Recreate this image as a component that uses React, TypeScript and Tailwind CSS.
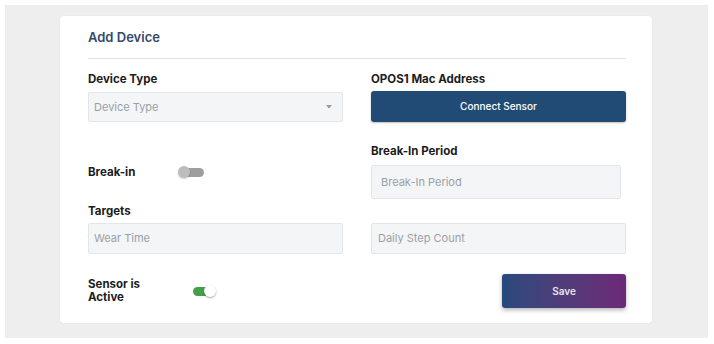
function Toggle({ on }: { on: boolean }) {
  if (on) {
    return (
      <div className="relative h-[12px] w-[26px]">
        <div className="absolute left-0 top-[1.5px] h-[9px] w-[20px] rounded-full bg-[#43a047]" />
        <div className="absolute right-[3px] top-0 h-[12px] w-[12px] rounded-full bg-white shadow-[0_1px_2px_rgba(0,0,0,0.35)]" />
      </div>
    );
  }
  return (
    <div className="relative h-[12px] w-[26px]">
      <div className="absolute right-0 top-[1.5px] h-[9px] w-[20px] rounded-full bg-[#9e9e9e]" />
      <div className="absolute left-0 top-0 h-[12px] w-[12px] rounded-full bg-[#bdbdbd] shadow-[0_1px_2px_rgba(0,0,0,0.2)]" />
    </div>
  );
}

function Field({
  placeholder,
  className = "",
  children,
}: {
  placeholder: string;
  className?: string;
  children?: React.ReactNode;
}) {
  return (
    <div
      className={`flex items-center rounded-[2px] border border-[#e2e5e9] bg-[#f3f5f7] text-[11px] text-[#9aa0a6] ${className}`}
    >
      {placeholder}
      {children}
    </div>
  );
}

export default function App() {
  return (
    <div
      className="h-[344px] w-[714px] bg-white p-[5px]"
      style={{ fontFamily: "Inter, 'Liberation Sans', sans-serif" }}
    >
      <div className="h-[333px] w-[703px] bg-[#eeeeee] pl-[55px] pt-[11px]">
        <div className="h-[307px] w-[592px] rounded-[4px] bg-white pl-[28px] pr-[26px] pt-[13px] shadow-[0_0_2px_rgba(0,0,0,0.06)]">
          <h1 className="text-[13px] font-semibold leading-4 text-[#34496b]">Add Device</h1>
          <div className="mt-[13px] h-px bg-[#e3e3e3]" />

          {/* row 1 */}
          <div className="mt-[13px] grid grid-cols-2 gap-x-[28px]">
            <div>
              <div className="text-[11.5px] font-bold leading-[14px] text-[#1c1c1c]">Device Type</div>
              <Field placeholder="Device Type" className="mt-[6px] h-[30px] justify-between pl-[5px] pr-[10px]">
                <svg width="6" height="4" viewBox="0 0 6 4">
                  <path d="M0 0 L6 0 L3 3.5 Z" fill="#9a9a9a" />
                </svg>
              </Field>
            </div>
            <div>
              <div className="text-[11.5px] font-bold leading-[14px] text-[#1c1c1c]">OPOS1 Mac Address</div>
              <button className="mt-[5px] flex h-[31px] w-full items-center justify-center rounded-[3px] bg-[#214b75] text-[10px] font-medium text-white shadow-[0_1px_2px_rgba(0,0,0,0.25)]">
                Connect Sensor
              </button>
            </div>
          </div>

          {/* row 2 */}
          <div className="mt-[22px] grid grid-cols-2 gap-x-[28px]">
            <div className="flex items-center self-start pt-[21px]">
              <div className="w-[90px] text-[11.5px] font-bold leading-[14px] text-[#1c1c1c]">Break-in</div>
              <Toggle on={false} />
            </div>
            <div>
              <div className="text-[11.5px] font-bold leading-[14px] text-[#1c1c1c]">Break-In Period</div>
              <Field placeholder="Break-In Period" className="mt-[7px] h-[34px] w-[250px] px-[9px]" />
            </div>
          </div>

          {/* row 3 */}
          <div className="mt-[5px] text-[11.5px] font-bold leading-[14px] text-[#1c1c1c]">Targets</div>
          <div className="mt-[5px] grid grid-cols-2 gap-x-[28px]">
            <Field placeholder="Wear Time" className="h-[31px] px-[5px]" />
            <Field placeholder="Daily Step Count" className="h-[31px] px-[6px]" />
          </div>

          {/* row 4 */}
          <div className="mt-[20px] grid grid-cols-2 gap-x-[28px]">
            <div className="flex items-center">
              <div className="w-[105px] text-[11.5px] font-bold leading-[13px] text-[#1c1c1c]">
                Sensor is
                <br />
                Active
              </div>
              <Toggle on={true} />
            </div>
            <div className="flex justify-end">
              <button className="flex h-[34px] w-[124px] items-center justify-center rounded-[3px] bg-gradient-to-r from-[#27497d] to-[#6c2877] text-[10px] font-semibold text-[#ece4f2] shadow-[0_2px_4px_rgba(0,0,0,0.3)]">
                Save
              </button>
            </div>
          </div>
        </div>
      </div>
    </div>
  );
}
